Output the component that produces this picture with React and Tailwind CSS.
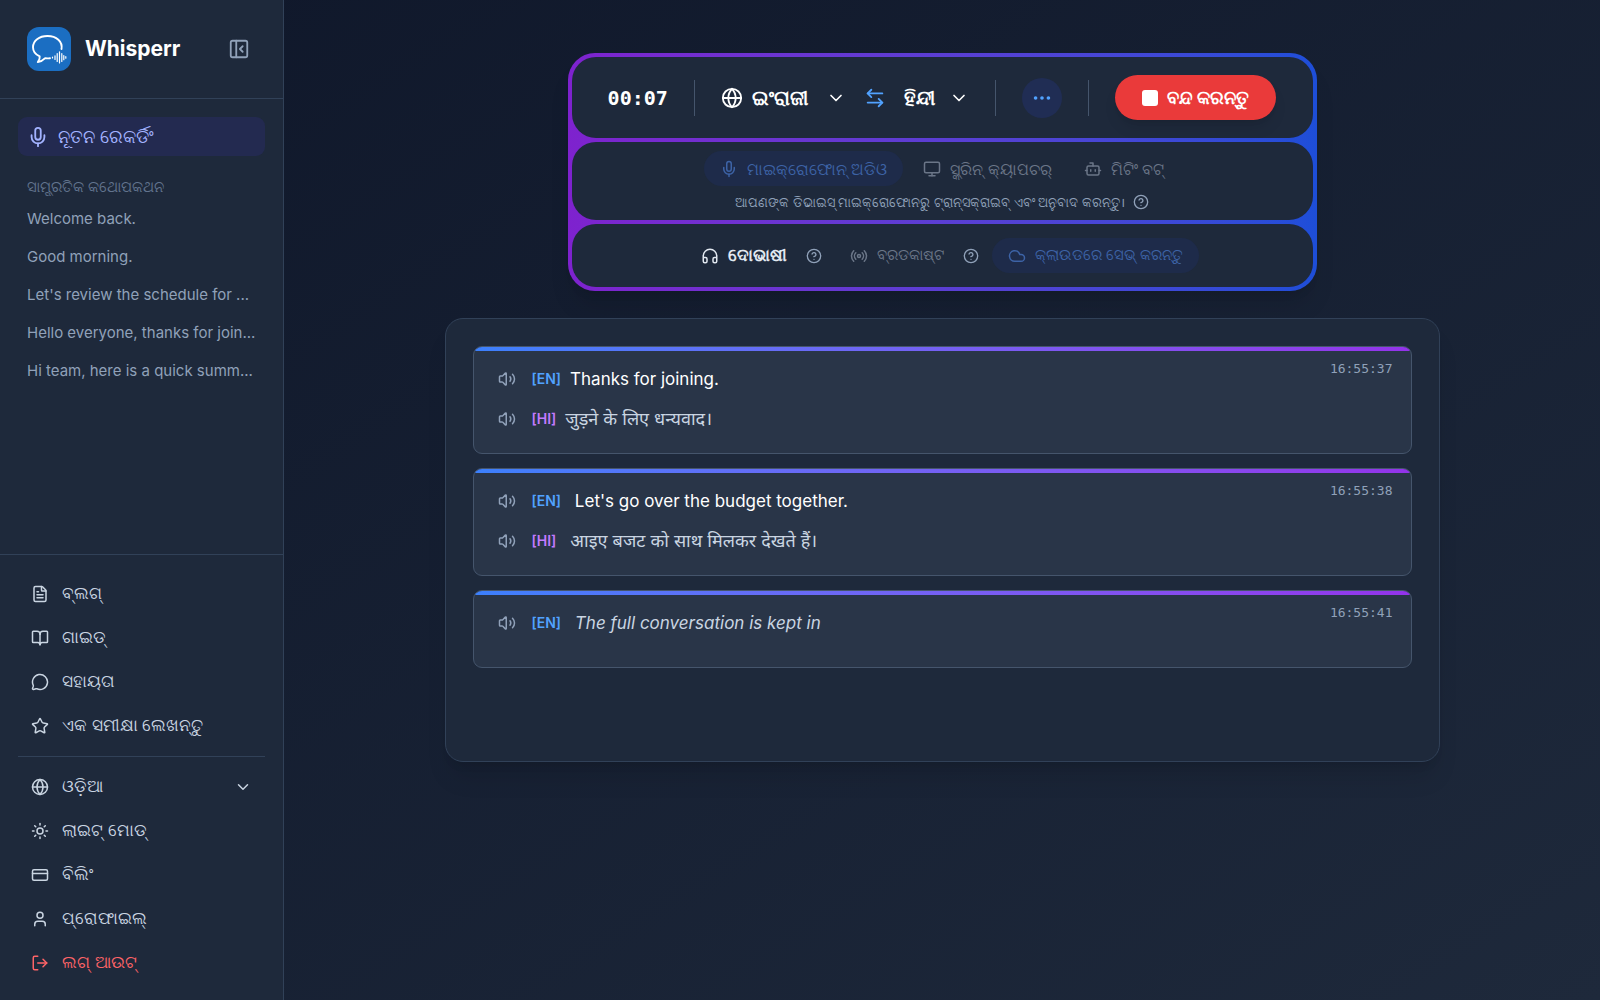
import React from "react";
import {
  Mic, FileText, BookOpen, MessageCircle, Star, Globe, Sun, CreditCard, User, LogOut,
  ChevronDown, CircleHelp, Monitor, Bot, Headphones, Radio, Cloud, Volume2, Ellipsis, PanelLeftClose,
  ArrowLeftRight,
} from "lucide-react";

const history = [
  "Welcome back.",
  "Good morning.",
  "Let's review the schedule for ...",
  "Hello everyone, thanks for join...",
  "Hi team, here is a quick summ...",
];

const links = [
  [FileText, "ବ୍ଲଗ୍"],
  [BookOpen, "ଗାଇଡ୍"],
  [MessageCircle, "ସହାୟତା"],
  [Star, "ଏକ ସମୀକ୍ଷା ଲେଖନ୍ତୁ"],
];

const settings = [
  [Sun, "ଲାଇଟ୍ ମୋଡ୍"],
  [CreditCard, "ବିଲିଂ"],
  [User, "ପ୍ରୋଫାଇଲ୍"],
];

const entries = [
  { time: "16:55:37", en: "Thanks for joining.", hi: "जुड़ने के लिए धन्यवाद।" },
  { time: "16:55:38", en: " Let's go over the budget together.", hi: " आइए बजट को साथ मिलकर देखते हैं।" },
  { time: "16:55:41", en: " The full conversation is kept in", pending: true },
];

const row = "flex h-11 w-full items-center gap-[13px] rounded-lg px-[13px] text-[17px] font-medium";

function Logo() {
  return (
    <svg viewBox="0 0 44 44" className="size-11 shrink-0" aria-hidden="true">
      <rect width="44" height="44" rx="12" fill="#1b6ec2" />
      <g fill="none" stroke="#fff" strokeLinecap="round" strokeLinejoin="round">
        <path strokeWidth="1.9" d="M34.5 22C35.800 14.500 29.500 9 20.500 9C12 9 6 13.800 6 20.200C6 24.300 8.500 27.500 12.700 29.300C13 31.500 12 33.500 10.800 35C14.200 34.600 16.500 33 18.200 31.200C20 31.500 21.500 31.400 23 31.200" />
        <path strokeWidth="1.2" d="M25.500 30V31M28 28.800V32.500M30.200 26.500V34.500M32.500 24.800V36M34.800 26.500V34.500M36.800 28.500V32.700M38.800 29.700V31.200" />
      </g>
    </svg>
  );
}

function Help({ label }) {
  return (
    <button type="button" aria-label={label} className="text-slate-400">
      <CircleHelp size={16} />
    </button>
  );
}

function Line({ lang, tone, children, textTone }) {
  return (
    <div className="flex h-[30px] items-center">
      <button type="button" aria-label={`Play ${lang}`} className="mr-4 text-slate-400">
        <Volume2 size={18} />
      </button>
      <span className={`mr-[9px] text-[14px] leading-7 font-semibold ${tone}`}>[{lang}]</span>
      <p className={`whitespace-pre leading-7 ${textTone}`}>{children}</p>
    </div>
  );
}

export default function App() {
  return (
    <div lang="or" className="flex min-h-screen bg-linear-to-br from-[#0f172a] to-[#1e293b] font-['Inter','Noto_Sans',sans-serif] text-slate-300">
      <aside className="flex w-[284px] shrink-0 flex-col border-r border-slate-700 bg-[#1e293b]">
        <header className="flex h-[99px] items-center border-b border-slate-700 pr-[33px] pl-[27px]">
          <Logo />
          <h1 className="ml-[14px] text-[21px] font-bold text-white">Whisperr</h1>
          <button type="button" aria-label="Collapse sidebar" className="ml-auto text-slate-400">
            <PanelLeftClose size={22} />
          </button>
        </header>

        <nav className="flex flex-1 flex-col px-[18px] pt-[18px]">
          <button type="button" className="flex h-[39px] items-center gap-[9px] rounded-[9px] bg-[#232a50] px-[9px] text-[18px] font-medium text-[#a3b3ff]">
            <Mic size={22} />
            ନୂତନ ରେକର୍ଡିଂ
          </button>
          <h2 className="mt-[21px] px-[9px] text-[15px] leading-5 font-medium text-slate-500">ସାମ୍ପ୍ରତିକ କଥୋପକଥନ</h2>
          <ul className="mt-[3px]">
            {history.map((text) => (
              <li key={text}>
                <a href="#" className="block h-[38px] truncate px-[9px] text-[15px] leading-[38px] text-slate-400">{text}</a>
              </li>
            ))}
          </ul>
        </nav>

        <footer className="border-t border-slate-700 px-[18px] pt-[17px] pb-[15px]">
          {links.map(([Icon, text]) => (
            <a key={text} href="#" className={row}>
              <Icon size={18} />
              {text}
            </a>
          ))}
          <hr className="my-2 border-slate-700" />
          <button type="button" className={row}>
            <Globe size={18} />
            ଓଡ଼ିଆ
            <ChevronDown size={18} className="ml-auto" />
          </button>
          {settings.map(([Icon, text]) => (
            <button type="button" key={text} className={row}>
              <Icon size={18} />
              {text}
            </button>
          ))}
          <button type="button" className={`${row} text-[#ff6467]`}>
            <LogOut size={18} />
            ଲଗ୍ ଆଉଟ୍
          </button>
        </footer>
      </aside>

      <main className="flex min-w-0 flex-1 flex-col items-center px-9 pt-[53px]">
        <section className="flex w-full max-w-[749px] flex-col gap-1 rounded-[27px] bg-linear-to-r from-[#7e22ce] to-[#1d4ed8] p-1 shadow-xl">
          <div className="flex h-[81px] items-center justify-center rounded-[24px] bg-[#1e293b] text-white">
            <time className="font-['DejaVu_Sans_Mono',monospace] text-[20px] font-bold">00:07</time>
            <span className="mx-[26px] h-9 w-px bg-slate-600" />
            <button type="button" className="flex items-center gap-[9px] text-[20px] font-semibold">
              <Globe size={22} />
              <span className="min-w-[65px] text-left">ଇଂରାଜୀ</span>
              <ChevronDown size={20} />
            </button>
            <button type="button" aria-label="Swap languages" className="mx-[18px] text-[#51a2ff]">
              <ArrowLeftRight size={22} />
            </button>
            <button type="button" className="flex items-center gap-[9px] text-[20px] font-semibold">
              <span className="min-w-[36px] text-left">ହିନ୍ଦୀ</span>
              <ChevronDown size={20} />
            </button>
            <span className="mx-[26px] h-9 w-px bg-slate-600" />
            <button type="button" aria-label="More options" className="flex size-10 items-center justify-center rounded-full bg-[#202d54] text-[#51a2ff]">
              <Ellipsis size={22} />
            </button>
            <span className="mx-[26px] h-9 w-px bg-slate-600" />
            <button type="button" className="flex h-[45px] items-center gap-[9px] rounded-full bg-[#ea3a3a] px-[27px] text-[18px] font-semibold shadow-lg">
              <span className="size-4 rounded-[3px] bg-white" />
              ବନ୍ଦ କରନ୍ତୁ
            </button>
          </div>

          <div className="flex h-[78px] flex-col items-center rounded-[24px] bg-[#1e293b] pt-[9px]">
            <div className="flex text-[16px] font-medium text-[#6b7688]">
              <button type="button" className="flex h-[35px] items-center gap-[9px] rounded-full bg-[#1e2b4a] px-4 text-[#3d63a6]">
                <Mic size={18} />
                ମାଇକ୍ରୋଫୋନ୍ ଅଡିଓ
              </button>
              <button type="button" className="ml-1 flex h-[35px] items-center gap-[9px] px-4">
                <Monitor size={18} />
                ସ୍କ୍ରିନ୍ କ୍ୟାପଚର୍
              </button>
              <button type="button" className="flex h-[35px] items-center gap-[9px] px-4">
                <Bot size={18} />
                ମିଟିଂ ବଟ୍
              </button>
            </div>
            <p className="flex items-center gap-2 text-[13px] leading-8 text-slate-400">
              ଆପଣଙ୍କ ଡିଭାଇସ୍ ମାଇକ୍ରୋଫୋନରୁ ଟ୍ରାନ୍ସକ୍ରାଇବ୍ ଏବଂ ଅନୁବାଦ କରନ୍ତୁ।
              <Help label="About microphone audio" />
            </p>
          </div>

          <div className="flex h-[63px] items-center justify-center rounded-[24px] bg-[#1e293b] pl-4 text-[15px] font-medium">
            <button type="button" className="mr-[19px] flex items-center gap-[9px] text-[17px] font-semibold text-slate-200">
              <Headphones size={18} />
              ଦୋଭାଷୀ
            </button>
            <Help label="About interpreter" />
            <button type="button" className="mr-[19px] ml-7 flex items-center gap-[9px] text-[#6b7688]">
              <Radio size={18} />
              ବ୍ରଡକାଷ୍ଟ
            </button>
            <Help label="About broadcast" />
            <button type="button" className="ml-[13px] flex h-[35px] items-center gap-[9px] rounded-full bg-[#1e2b4a] px-4 text-[#3d63a6]">
              <Cloud size={18} />
              କ୍ଲାଉଡରେ ସେଭ୍ କରନ୍ତୁ
            </button>
          </div>
        </section>

        <section className="mt-[27px] flex min-h-[444px] w-full max-w-[995px] flex-col gap-[14px] rounded-[18px] border border-slate-700 bg-[#1e293b] p-[27px] shadow-xl">
          {entries.map((e) => (
            <article key={e.time} className="relative overflow-hidden rounded-[9px] border border-slate-600 bg-[#293548]">
              <div className="h-1 bg-linear-to-r from-[#3b80fc] to-[#9333ea]" />
              <time className="absolute top-3 right-[18px] font-['DejaVu_Sans_Mono',monospace] text-[13px] leading-5 text-slate-400">{e.time}</time>
              <div className="px-6 pt-[13px] pb-[19px]">
                <div className="mb-[10px]">
                  <Line lang="EN" tone="text-[#51a2ff]" textTone={e.pending ? "text-[17px] italic text-slate-300" : "text-[17px] text-white"}>{e.en}</Line>
                </div>
                {e.hi && <Line lang="HI" tone="text-[#c27aff]" textTone="text-[18px] text-slate-300">{e.hi}</Line>}
              </div>
            </article>
          ))}
        </section>
      </main>
    </div>
  );
}
